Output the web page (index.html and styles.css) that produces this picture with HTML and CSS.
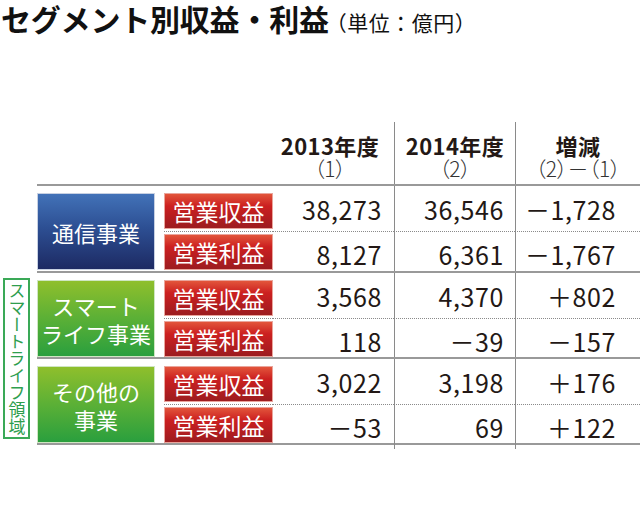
FILE: index.html
```html
<!DOCTYPE html>
<html lang="ja">
<head>
<meta charset="utf-8">
<link rel="stylesheet" href="styles.css">
</head>
<body>
<h1 class="title">セグメント別収益・利益<span class="unit">（単位：億円）</span></h1>
<div class="table">
  <div class="side-col"></div>
  <div class="head">
    <div class="hc c3"><div class="h1">2013年度</div><div class="h2">（1）</div></div>
    <div class="hc c4 vl"><div class="h1">2014年度</div><div class="h2">（2）</div></div>
    <div class="hc c5 vl"><div class="h1">増減</div><div class="h2">（2）－（1）</div></div>
  </div>

  <div class="side-col"></div>
  <div class="group g1">
    <div class="seg blue"><span>通信事業</span></div>
    <div class="lab r1"><span class="red">営業収益</span></div>
    <div class="num n3 r1">38,273</div>
    <div class="num n4 r1 vl">36,546</div>
    <div class="num n5 r1 vl">－1,728</div>
    <div class="lab r2"><span class="red">営業利益</span></div>
    <div class="num n3">8,127</div>
    <div class="num n4 vl">6,361</div>
    <div class="num n5 vl">－1,767</div>
  </div>

  <div class="side"><span>スマートライフ領域</span></div>
  <div class="group g2">
    <div class="seg green"><span>スマート<br>ライフ事業</span></div>
    <div class="lab r1"><span class="red">営業収益</span></div>
    <div class="num n3 r1">3,568</div>
    <div class="num n4 r1 vl">4,370</div>
    <div class="num n5 r1 vl">＋802</div>
    <div class="lab r2"><span class="red">営業利益</span></div>
    <div class="num n3">118</div>
    <div class="num n4 vl">－39</div>
    <div class="num n5 vl">－157</div>
  </div>

  <div class="group g3 last">
    <div class="seg green"><span>その他の<br>事業</span></div>
    <div class="lab r1"><span class="red">営業収益</span></div>
    <div class="num n3 r1">3,022</div>
    <div class="num n4 r1 vl">3,198</div>
    <div class="num n5 r1 vl">＋176</div>
    <div class="lab r2"><span class="red">営業利益</span></div>
    <div class="num n3">－53</div>
    <div class="num n4 vl">69</div>
    <div class="num n5 vl">＋122</div>
  </div>
</div>
</body>
</html>
```

FILE: styles.css
```css
html, body {
  margin: 0;
  padding: 0;
  background: #fff;
}
body {
  width: 640px;
  height: 508px;
  overflow: hidden;
  font-family: "Noto Sans CJK JP", "Noto Sans", sans-serif;
  color: #231815;
}
.title {
  margin: 0;
  padding: 0 0 0 1px;
  height: 122px;
  font-size: 30px;
  line-height: 36px;
  font-weight: 700;
  letter-spacing: -0.2px;
  color: #111;
  white-space: nowrap;
}
.unit {
  font-size: 21px;
  font-weight: 400;
  letter-spacing: 0.5px;
  margin-left: -3px;
}
.table {
  display: grid;
  grid-template-columns: 37px 603px;
  grid-template-rows: 62px 87px 86px 88px;
}
.head {
  display: grid;
  grid-template-columns: 236px 121px 121px 125px;
}
.hc {
  display: flex;
  flex-direction: column;
  align-items: center;
  justify-content: flex-start;
  padding-top: 11px;
}
.c3 { grid-column: 2; padding-right: 7px; }
.c4 { grid-column: 3; }
.c5 { grid-column: 4; }
.h1 {
  font-size: 22px;
  font-weight: 700;
  line-height: 24px;
  letter-spacing: 0.4px;
}
.h2 {
  font-size: 21px;
  font-weight: 300;
  line-height: 22px;
  color: #333;
  font-feature-settings: "palt";
}
.vl {
  border-left: 1px solid #8a8a8a;
}
.group {
  display: grid;
  grid-template-columns: 127px 109px 121px 121px 125px;
  grid-template-rows: 1fr 1fr;
  border-top: 2px solid #999;
}
.group.last {
  border-bottom: 2px solid #999;
}
.seg {
  grid-row: 1 / 3;
  grid-column: 1;
  margin: 7px 9px 6px 0;
  display: flex;
  align-items: center;
  justify-content: center;
  text-align: center;
  color: #fff;
  font-size: 22px;
  line-height: 28px;
  border: 1px solid #c7d0e2;
}
.blue {
  background: linear-gradient(#4272b8, #2d4f93 45%, #1d2a63);
}
.green {
  background: linear-gradient(#8fbf2c, #5bb036 50%, #2a9f3e);
  border-color: #cfe6c2;
}
.lab {
  grid-column: 2;
  display: flex;
  padding: 7px 0 2px;
}
.lab.r2 { padding: 2px 0 6px; }
.lab.r1, .num.r1 {
  border-bottom: 1px dotted #8a8a8a;
}
.red {
  flex: 1;
  display: flex;
  align-items: center;
  justify-content: center;
  color: #fff;
  font-size: 23px;
  background: linear-gradient(#e2553b, #cc2020 35%, #b31d20 70%, #9c1c1f);
  border: 1px solid #eaa59c;
}
.num {
  display: flex;
  align-items: center;
  justify-content: flex-end;
  font-size: 25px;
  letter-spacing: 0.6px;
  font-weight: 400;
  white-space: nowrap;
}
.n3 { grid-column: 3; padding-right: 12px; }
.n4 { grid-column: 4; padding-right: 11px; }
.n5 { grid-column: 5; padding-right: 24px; }
.side {
  grid-row: 3 / 5;
  grid-column: 1;
  margin: 7px 7px 6px 3px;
  border: 2px solid #3aa957;
  display: flex;
  justify-content: center;
  align-items: center;
  color: #2e9e4e;
}
.side span {
  writing-mode: vertical-rl;
  font-size: 17px;
  line-height: 20px;
  letter-spacing: 0;
}
```
